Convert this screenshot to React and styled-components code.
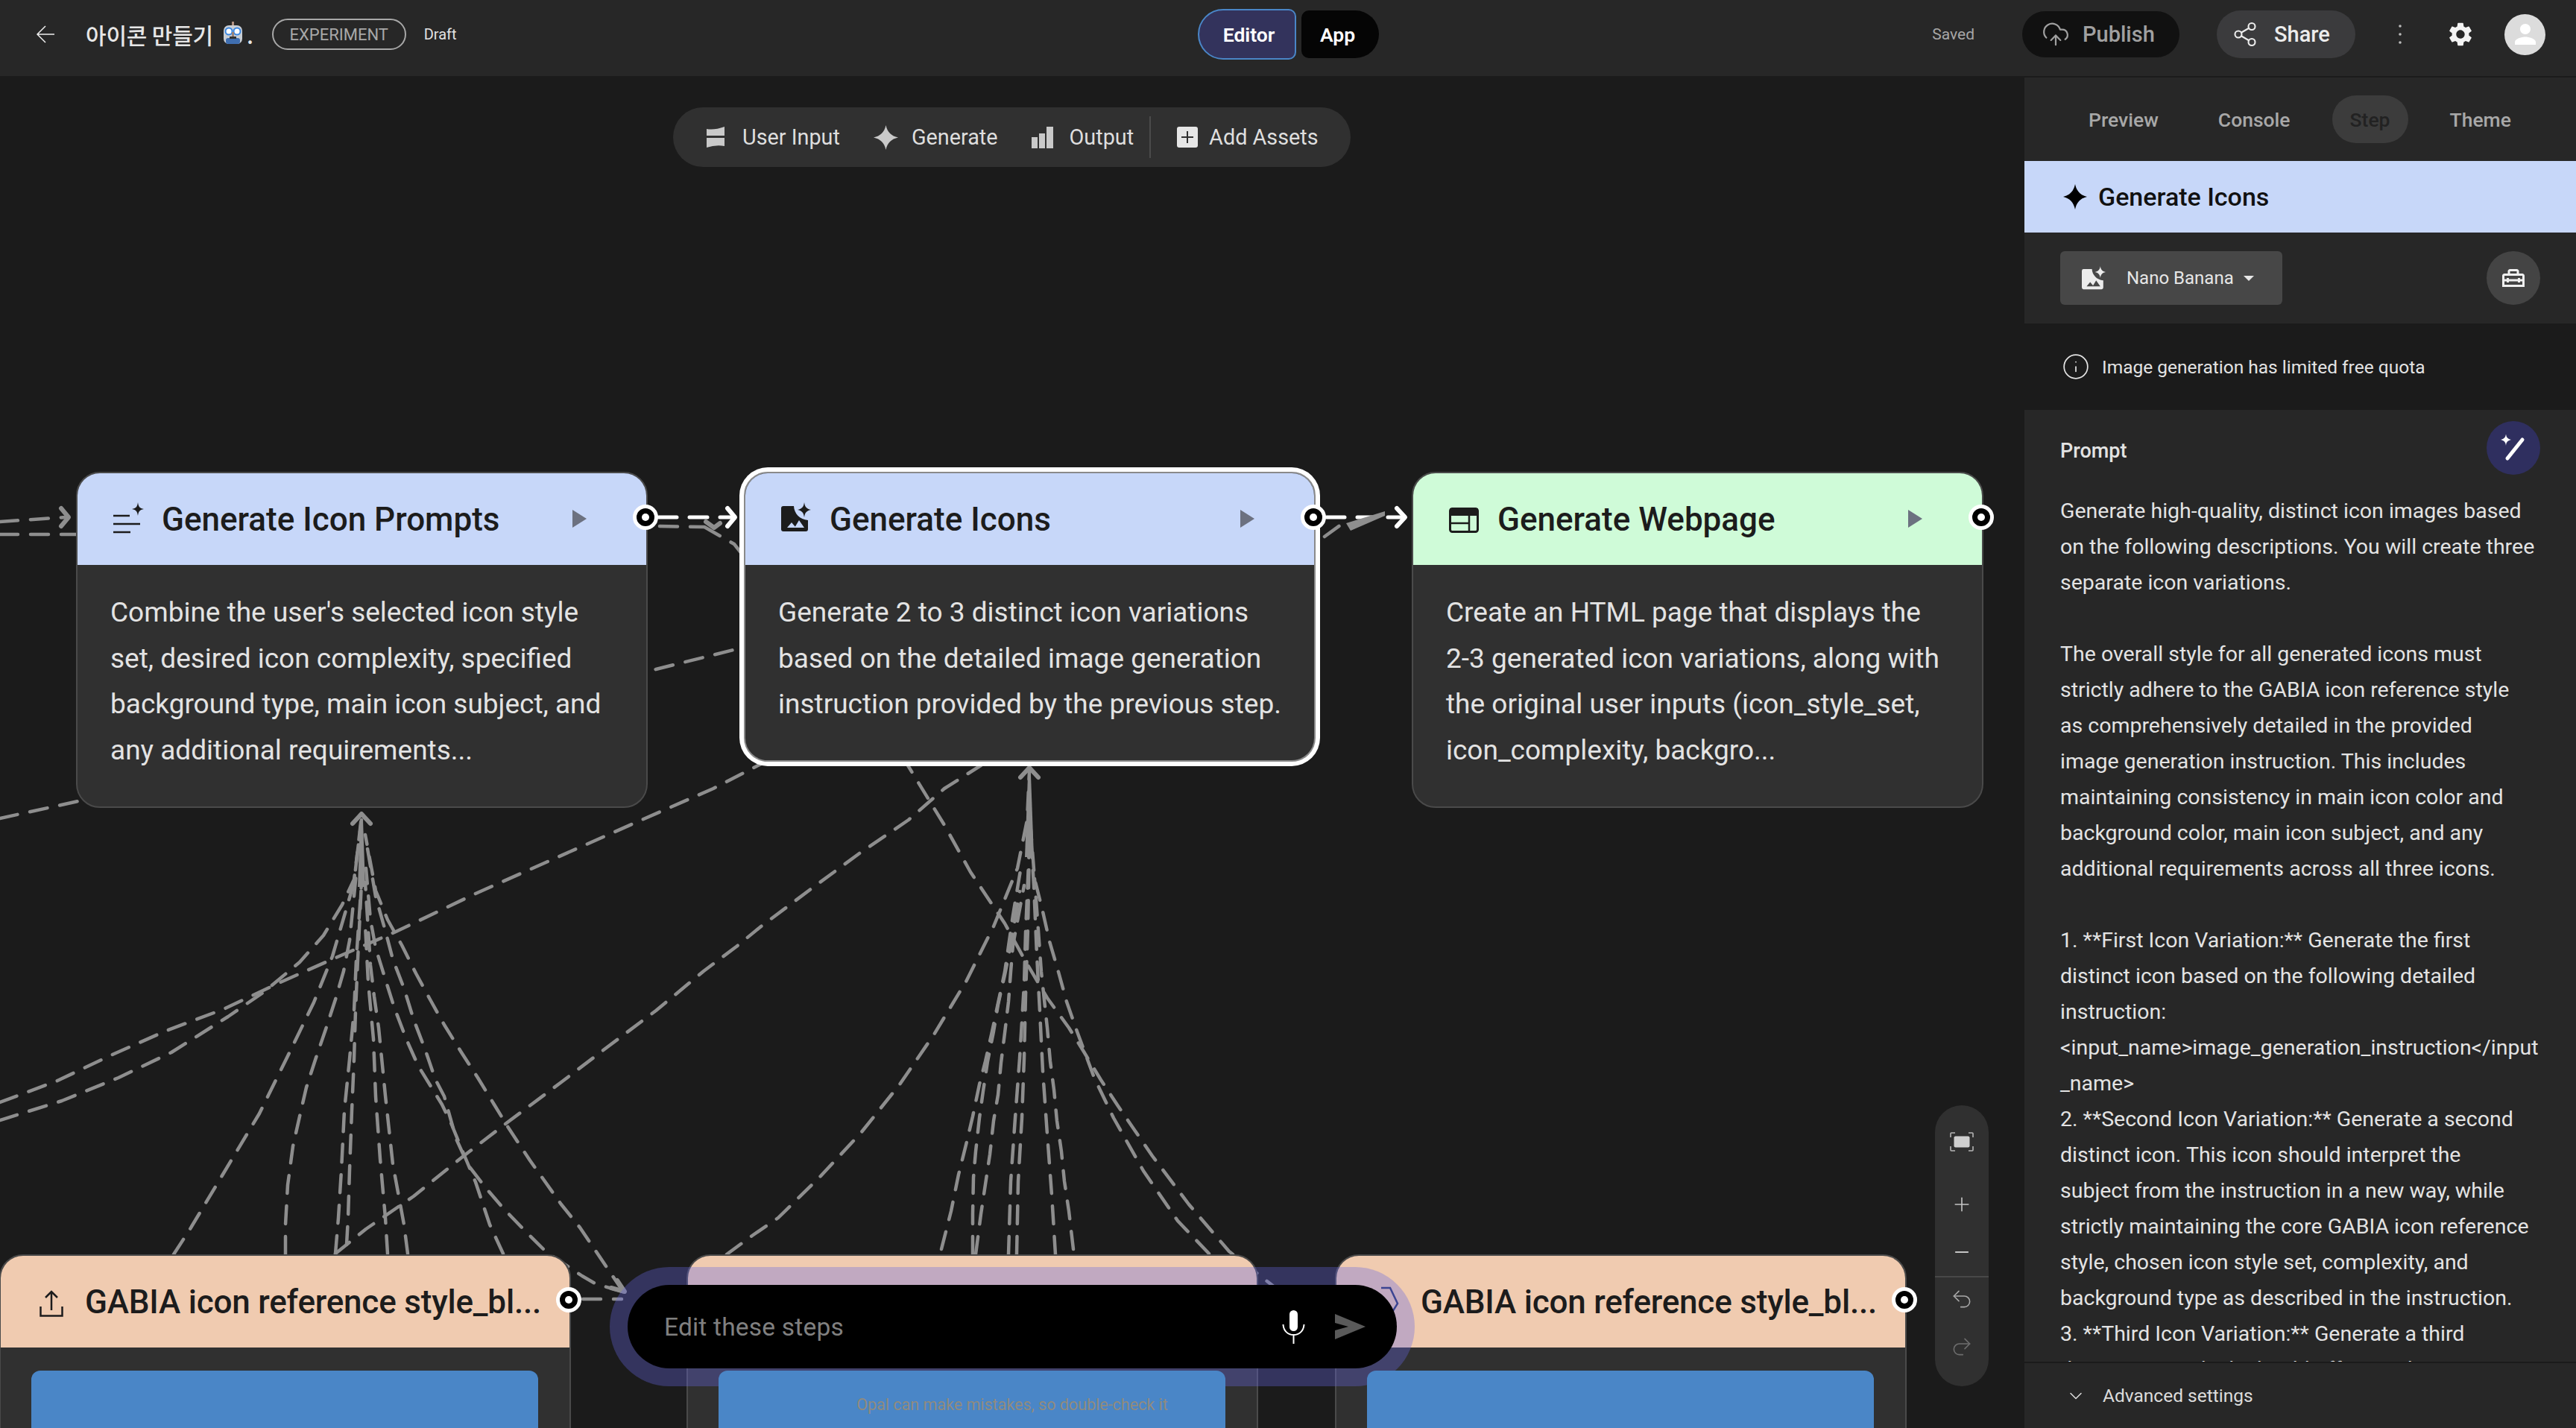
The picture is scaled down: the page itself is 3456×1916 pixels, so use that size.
import React from 'react'
import styled, { createGlobalStyle } from 'styled-components'
import { CloudUpload, Share2, Info, ChevronDown, Plus, Minus, Undo2, Redo2 } from 'lucide-react'
import { MdSettings, MdPerson, MdOutlineHomeRepairService } from 'react-icons/md'

const GlobalStyle = createGlobalStyle`
    html, body {
        margin: 0;
        padding: 0;
        background: #1b1b1b;
    }
    body {
        font-family: Roboto, "Noto Sans CJK KR", sans-serif;
    }
`

const Page = styled.div`
    width: 3456px;
    height: 1916px;
    display: flex;
    flex-direction: column;
    overflow: hidden;
    background: #1b1b1b;
`

/* header */

const Header = styled.header`
    height: 102px;
    flex: none;
    display: grid;
    grid-template-columns: 1fr auto 1fr;
    align-items: center;
    padding: 0 41px 10px 41px;
    box-sizing: border-box;
    background: #272727;
`

const HeaderLeft = styled.div`
    display: flex;
    align-items: center;
`

const BackIcon = styled.svg`
    width: 24px;
    height: 24px;
    margin: 0 42px 0 8px;
    fill: none;
    stroke: #f0f0f0;
    stroke-width: 1.5;
`

const Title = styled.div`
    display: flex;
    align-items: center;
    font-family: 'Noto Sans CJK KR', sans-serif;
    font-size: 30px;
    font-weight: 500;
    color: #e6e6e6;
    margin-right: 25px;
    letter-spacing: -0.2px;
`

const RobotIcon = styled.svg`
    width: 27px;
    height: 32px;
    margin: 0 5px 4px 13px;
`

const ExperimentPill = styled.span`
    height: 42px;
    width: 180px;
    box-sizing: border-box;
    display: flex;
    align-items: center;
    justify-content: center;
    border: 2px solid #a8a8a8;
    border-radius: 21px;
    font-size: 22px;
    color: #a8a8a8;
    margin-right: 24px;
`

const DraftLabel = styled.span`
    font-size: 20px;
    color: #e2e2e2;
`

const ModeToggle = styled.div`
    display: flex;
    align-items: center;
    gap: 7px;
`

const ModeButton = styled.button`
    height: ${(p) => (p.$active ? 68 : 64)}px;
    width: ${(p) => (p.$active ? 132 : 104)}px;
    box-sizing: border-box;
    border: ${(p) => (p.$active ? '2px solid #4a86c7' : 'none')};
    border-radius: ${(p) => (p.$active ? '34px 10px 10px 34px' : '10px 32px 32px 10px')};
    background: ${(p) => (p.$active ? '#33335c' : '#050505')};
    color: #fff;
    font-family: inherit;
    font-size: 26.5px;
    font-weight: 600;
    padding: ${(p) => (p.$active ? '0 0 0 6px' : '0 6px 0 0')};
`

const HeaderRight = styled.div`
    display: flex;
    align-items: center;
    justify-content: flex-end;
`

const SavedLabel = styled.span`
    font-size: 21px;
    color: #a6a6a6;
    margin-right: 64px;
`

const PublishButton = styled.div`
    width: 211px;
    height: 62px;
    box-sizing: border-box;
    display: flex;
    align-items: center;
    gap: 17px;
    padding-left: 26px;
    border-radius: 31px;
    background: #111;
    color: #a0a0a0;
    font-size: 29px;
    font-weight: 500;
    margin-right: 50px;
`

const ShareButton = styled.div`
    width: 186px;
    height: 64px;
    box-sizing: border-box;
    display: flex;
    align-items: center;
    gap: 21px;
    padding-left: 20px;
    border-radius: 32px;
    background: #3b3b3d;
    color: #ececec;
    font-size: 29px;
    font-weight: 500;
    margin-right: 48px;
`

const DotsIcon = styled.svg`
    width: 24px;
    height: 32px;
    fill: #bdbdbd;
    margin-right: 50px;
`

const GearIcon = styled(MdSettings)`
    width: 38px;
    height: 38px;
    color: #f4f4f4;
    margin-right: 40px;
`

const Avatar = styled.div`
    width: 55px;
    height: 55px;
    border-radius: 50%;
    background: #dcdcdc;
    display: flex;
    align-items: center;
    justify-content: center;
    color: #fff;
    font-size: 42px;
`

/* canvas */

const Body = styled.div`
    flex: 1;
    display: flex;
    min-height: 0;
`

const Canvas = styled.main`
    position: relative;
    width: 2716px;
    flex: none;
    overflow: hidden;
    background: #1b1b1b;
`

const EdgeLayer = styled.svg`
    position: absolute;
    left: 0;
    top: 0;
    width: 2716px;
    height: 1814px;
`

const DashedEdge = styled.polyline`
    fill: none;
    stroke: ${(p) => (p.$active ? '#ffffff' : '#8e8e8e')};
    stroke-width: ${(p) => (p.$active ? 5 : 4.5)};
    stroke-linecap: round;
    stroke-linejoin: round;
    stroke-dasharray: 24 17;
`

const ArrowHead = styled.polyline`
    fill: none;
    stroke: ${(p) => (p.$active ? '#ffffff' : '#8e8e8e')};
    stroke-width: 6;
    stroke-linecap: round;
    stroke-linejoin: round;
`

const Trunk = styled.polygon`
    fill: #8e8e8e;
`

const Palette = styled.div`
    position: absolute;
    left: 903px;
    top: 42px;
    height: 80px;
    width: 909px;
    box-sizing: border-box;
    display: flex;
    align-items: center;
    padding-left: 45px;
    border-radius: 40px;
    background: #303030;
`

const PaletteItem = styled.div`
    display: flex;
    align-items: center;
    gap: ${(p) => p.$gap || 22}px;
    margin-right: ${(p) => p.$after || 0}px;
    font-size: 28.8px;
    color: #dedede;
`

const PaletteDivider = styled.div`
    width: 2px;
    height: 56px;
    background: #4b4b4b;
    margin-right: 35px;
`

const PaletteIcon = styled.svg`
    width: ${(p) => p.$w}px;
    height: ${(p) => p.$h || p.$w}px;
    fill: #c9c9c9;
`

const Node = styled.section`
    position: absolute;
    left: ${(p) => p.$x}px;
    top: ${(p) => p.$y}px;
    width: 767px;
    box-sizing: border-box;
    border: 2px solid ${(p) => (p.$selected ? '#8a8a8a' : '#4a4a4a')};
    border-radius: 32px;
    background: #303030;
    box-shadow: ${(p) => (p.$selected ? '0 0 0 6px #fff' : 'none')};
`

const NodeHeader = styled.div`
    height: 123px;
    display: flex;
    align-items: center;
    box-sizing: border-box;
    padding: 0 80px 0 48px;
    border-radius: 30px 30px 0 0;
    background: ${(p) => p.$color};
    color: #1c1c1c;
`

const NodeIconBox = styled.div`
    width: 40px;
    flex: none;
    margin-right: 25px;
    display: flex;
    justify-content: center;
`

const NodeIcon = styled.svg`
    width: ${(p) => p.$w || 40}px;
    height: 40px;
    overflow: visible;
    display: block;
`

const NodeTitle = styled.h3`
    flex: 1;
    margin: 0;
    font-size: 44px;
    font-weight: 500;
    white-space: nowrap;
    letter-spacing: ${(p) => (p.$tight ? -0.2 : 0)}px;
`

const PlayIcon = styled.svg`
    width: 19px;
    height: 24px;
    flex: none;
    margin-top: -2px;
    fill: #6c7180;
`

const NodeBody = styled.div`
    padding: 33px 20px 44px 44px;
    font-size: 37px;
    line-height: 61.7px;
    color: #e3e3e3;
    white-space: pre;
`

const AssetBody = styled.div`
    padding: 31px 40px 0 41px;
    height: 200px;
`

const AssetImage = styled.div`
    position: relative;
    z-index: 2;
    height: 200px;
    width: 680px;
    margin-left: 0;
    border-radius: 12px 12px 0 0;
    background: #4a86c7;
`

const Port = styled.div`
    position: absolute;
    right: -16px;
    top: ${(p) => p.$top || 42}px;
    width: 34px;
    height: 34px;
    box-sizing: border-box;
    border: 5px solid #fff;
    border-radius: 50%;
    background: #000;
    display: flex;
    align-items: center;
    justify-content: center;

    &::after {
        content: '';
        width: 10px;
        height: 10px;
        border-radius: 50%;
        background: #fff;
    }
`

const Dock = styled.div`
    position: absolute;
    z-index: 1;
    left: 818px;
    top: 1598px;
    width: 1080px;
    height: 160px;
    box-sizing: border-box;
    padding: 24px;
    border-radius: 80px;
    background: rgba(103, 102, 225, 0.34);
`

const DockBar = styled.div`
    height: 112px;
    display: flex;
    align-items: center;
    padding: 0 42px 0 49px;
    border-radius: 56px;
    background: #000;
`

const DockPlaceholder = styled.span`
    flex: 1;
    font-size: 33.5px;
    color: #808080;
    letter-spacing: 0.2px;
`

const MicIcon = styled.svg`
    width: 31px;
    height: 45px;
    margin-right: 40px;
`

const SendIcon = styled.svg`
    width: 41px;
    height: 34px;
    fill: #5a5a5a;
`

const Disclaimer = styled.div`
    position: absolute;
    z-index: 3;
    left: 818px;
    width: 1080px;
    top: 1770px;
    text-align: center;
    font-size: 21.5px;
    color: #908b7e;
`

const ZoomPanel = styled.div`
    position: absolute;
    left: 2596px;
    top: 1381px;
    width: 72px;
    height: 377px;
    box-sizing: border-box;
    padding-top: 17px;
    display: flex;
    flex-direction: column;
    align-items: center;
    border-radius: 36px;
    background: #303030;
`

const ZoomButton = styled.div`
    width: 100%;
    height: 64px;
    flex: none;
    display: flex;
    align-items: center;
    justify-content: center;
    margin-bottom: ${(p) => p.$after || 0}px;
    color: ${(p) => p.$color || '#c4c4c4'};
`

const ZoomDivider = styled.div`
    width: 100%;
    height: 2px;
    flex: none;
    margin-bottom: -3px;
    background: #484848;
`

/* sidebar */

const Sidebar = styled.aside`
    flex: 1;
    display: flex;
    flex-direction: column;
    min-width: 0;
    border-top: 2px solid #1b1b1b;
    background: #272727;
`

const Tabs = styled.nav`
    height: 112px;
    flex: none;
    box-sizing: border-box;
    display: flex;
    align-items: center;
    gap: 32px;
    padding: 0 0 0 62px;
`

const Tab = styled.div`
    height: 64px;
    display: flex;
    align-items: center;
    padding: 0 24px;
    border-radius: 32px;
    font-size: 26.5px;
    font-weight: 500;
    color: ${(p) => (p.$active ? '#222' : '#a8a8a8')};
    background: ${(p) => (p.$active ? '#3c3c3c' : 'transparent')};
`

const StepBanner = styled.div`
    height: 96px;
    flex: none;
    display: flex;
    align-items: center;
    gap: 15px;
    padding-left: 52px;
    background: #c7d7f9;
    color: #111;
    font-size: 34px;
    font-weight: 500;
`

const BannerStar = styled.svg`
    width: 32px;
    height: 34px;
    fill: #000;
`

const ModelRow = styled.div`
    height: 122px;
    flex: none;
    display: flex;
    align-items: center;
    justify-content: space-between;
    padding: 0 48px;
`

const ModelSelect = styled.div`
    width: 298px;
    height: 72px;
    box-sizing: border-box;
    display: flex;
    align-items: center;
    padding-left: 29px;
    border-radius: 6px;
    background: #474747;
    color: #e6e6e6;
    font-size: 24px;
`

const ModelIcon = styled.svg`
    width: 32px;
    height: 36px;
    margin-right: 28px;
`

const Caret = styled.span`
    width: 0;
    height: 0;
    margin-left: 13px;
    border-left: 7px solid transparent;
    border-right: 7px solid transparent;
    border-top: 7px solid #e6e6e6;
`

const RoundButton = styled.div`
    width: 72px;
    height: 72px;
    border-radius: 50%;
    display: flex;
    align-items: center;
    justify-content: center;
    background: ${(p) => p.$color};
    color: #f0f0f0;
`

const QuotaRow = styled.div`
    height: 116px;
    flex: none;
    display: flex;
    align-items: center;
    gap: 16px;
    padding-left: 50px;
    background: #1b1b1b;
    color: #e3e3e3;
    font-size: 24.5px;
`

const PromptSection = styled.section`
    flex: 1;
    min-height: 0;
    overflow: hidden;
`

const PromptHead = styled.div`
    display: flex;
    align-items: center;
    justify-content: space-between;
    padding: 15px 48px 25px;
`

const PromptLabel = styled.span`
    font-size: 27px;
    font-weight: 500;
    color: #e3e3e3;
    margin-top: 8px;
`

const PromptText = styled.div`
    padding: 0 0 0 48px;
    font-size: 28.5px;
    line-height: 48px;
    color: #e3e3e3;
    white-space: pre;
`

const AdvancedRow = styled.div`
    height: 89px;
    flex: none;
    box-sizing: border-box;
    display: flex;
    align-items: center;
    gap: 22px;
    padding-left: 55px;
    border-top: 2px solid #1b1b1b;
    color: #dcdcdc;
    font-size: 24.5px;
`

/* drawings */

const STAR = 'M12 0C13.4 6.6 17.4 10.6 24 12C17.4 13.4 13.4 17.4 12 24C10.6 17.4 6.6 13.4 0 12C6.6 10.6 10.6 6.6 12 0Z'

const ImageSpark = ({ fg, cut }) => (
    <>
        <path
            fill={fg}
            d="M3 2H17C17.5 12 25 20 36 21V33Q36 36 33 36H3Q0 36 0 33V5Q0 2 3 2Z"
        />
        <path fill={cut} d="M8 31L14 24L20 31ZM18 31L24 21L31 31Z" />
        <path
            fill={fg}
            d="M31 -3C31.8 3 34 5.5 40 7C34 8.5 31.8 11 31 17C30.2 11 28 8.5 22 7C28 5.5 30.2 3 31 -3Z"
        />
    </>
)

const PromptsGlyph = () => (
    <>
        <path stroke="#1c1c1c" strokeWidth="2.5" fill="none" d="M0 15H22M0 26H36M0 37H23" />
        <path
            fill="#1c1c1c"
            d="M33 -3C33.8 3 35.5 5 41 6C35.5 7 33.8 9 33 15C32.2 9 30.5 7 25 6C30.5 5 32.2 3 33 -3Z"
        />
    </>
)

const WebGlyph = () => (
    <>
        <rect x="1.5" y="5.5" width="37" height="31" rx="3" fill="none" stroke="#1c1c1c" strokeWidth="3" />
        <path fill="#1c1c1c" d="M1 5H39V15H1Z" />
        <path stroke="#1c1c1c" strokeWidth="2.5" fill="none" d="M1 25H27M27 15V36" />
    </>
)

const UploadGlyph = () => (
    <path
        fill="none"
        stroke="#1c1c1c"
        strokeWidth="2.5"
        d="M1.5 26V38.5H30.5V26M16 31V6M8 14L16 6L24 14"
    />
)

const AttachGlyph = () => (
    <path fill="none" stroke="#26346a" strokeWidth="2.5" d="M8 1H20L30 22L20 38" />
)

const Play = () => (
    <PlayIcon viewBox="0 0 19 24">
        <path d="M0 0L19 12L0 24Z" />
    </PlayIcon>
)

const activeEdges = [
    [[884, 694], [982, 694]],
    [[1780, 694], [1882, 694]],
]

const edges = [
    // top left strays
    [[0, 700], [88, 694]],
    [[0, 717], [102, 717]],
    [[885, 706], [944, 707]],
    [[0, 1098], [105, 1075], [880, 898], [1000, 868]],
    [[1777, 720], [1806, 699]],

    // fan into Generate Icon Prompts
    [[0, 1503], [83, 1477], [159, 1446], [230, 1412], [306, 1364], [354, 1331], [402, 1291], [434, 1255], [459, 1214], [475, 1180], [485, 1100]],
    [[0, 1479], [77, 1450], [153, 1414], [223, 1383], [300, 1354], [376, 1318], [446, 1287], [529, 1251], [638, 1199], [746, 1151], [861, 1100], [957, 1058], [1021, 1025]],
    [[233, 1683], [255, 1649], [300, 1574], [348, 1494], [386, 1417], [421, 1345], [446, 1283], [475, 1184], [485, 1095]],
    [[383, 1683], [383, 1643], [386, 1590], [393, 1538], [402, 1498], [411, 1459], [424, 1419], [437, 1381], [450, 1341], [461, 1303], [469, 1262], [478, 1172]],
    [[450, 1682], [454, 1634], [458, 1570], [462, 1490], [469, 1421], [475, 1356], [478, 1287], [485, 1184]],
    [[465, 1670], [467, 1634], [469, 1570], [472, 1490], [475, 1421], [477, 1356], [480, 1287], [485, 1184]],
    [[547, 1682], [542, 1643], [527, 1562], [517, 1470], [508, 1379], [502, 1337], [497, 1295], [490, 1184]],
    [[520, 1682], [517, 1634], [510, 1555], [504, 1471], [501, 1394], [494, 1318], [490, 1241]],
    [[836, 1733], [778, 1647], [753, 1616], [711, 1557], [682, 1513], [663, 1482], [641, 1446], [619, 1412], [596, 1375], [577, 1341], [558, 1306], [539, 1268], [520, 1234], [504, 1195], [490, 1120]],
    [[836, 1733], [800, 1723], [781, 1712], [733, 1680], [702, 1649], [676, 1622], [651, 1593], [628, 1563], [612, 1528], [596, 1471], [584, 1448], [571, 1410], [555, 1368], [542, 1326], [527, 1287], [517, 1249], [504, 1203], [491, 1127]],
    [[675, 1682], [657, 1643], [638, 1586], [622, 1548], [606, 1509], [593, 1482], [577, 1456], [561, 1430], [545, 1394], [529, 1352], [517, 1314], [504, 1272], [497, 1234], [491, 1165]],
    [[782, 1743], [834, 1743]],

    // long diagonal from below into Generate Icons
    [[450, 1682], [491, 1649], [555, 1605], [622, 1551], [682, 1505], [753, 1452], [816, 1404], [880, 1356], [944, 1303], [988, 1270], [1021, 1243], [1089, 1192], [1153, 1145], [1219, 1100], [1267, 1058], [1316, 1027]],

    // fan into Generate Icons
    [[975, 1683], [1009, 1658], [1044, 1634], [1101, 1578], [1155, 1520], [1207, 1455], [1253, 1388], [1296, 1317], [1333, 1243], [1365, 1165], [1378, 1100], [1381, 1035]],
    [[1263, 1676], [1276, 1625], [1286, 1576], [1296, 1536], [1305, 1498], [1314, 1455], [1322, 1424], [1331, 1384], [1339, 1346], [1348, 1304], [1359, 1228], [1371, 1156]],
    [[1305, 1683], [1305, 1629], [1306, 1580], [1309, 1545], [1314, 1500], [1319, 1464], [1325, 1424], [1333, 1384], [1339, 1348], [1348, 1308], [1356, 1268], [1368, 1196]],
    [[1309, 1683], [1316, 1629], [1322, 1589], [1328, 1549], [1333, 1504], [1339, 1469], [1343, 1426], [1348, 1386], [1353, 1344], [1356, 1304], [1359, 1268], [1374, 1188]],
    [[1353, 1683], [1356, 1585], [1362, 1500], [1368, 1420], [1374, 1321], [1376, 1250], [1381, 1134]],
    [[1364, 1683], [1366, 1585], [1371, 1500], [1374, 1420], [1376, 1335], [1379, 1246], [1381, 1134]],
    [[1416, 1683], [1411, 1603], [1405, 1522], [1399, 1437], [1395, 1357], [1391, 1281], [1387, 1188], [1381, 1089]],
    [[1440, 1676], [1434, 1625], [1428, 1585], [1424, 1545], [1418, 1504], [1414, 1462], [1409, 1424], [1405, 1379], [1397, 1304], [1388, 1179]],
    [[1622, 1682], [1580, 1638], [1534, 1571], [1494, 1500], [1468, 1446], [1445, 1384], [1431, 1344], [1420, 1304], [1408, 1263], [1399, 1223], [1388, 1179], [1381, 1089]],
    [[945, 707], [985, 730], [1218, 1027], [1267, 1107], [1302, 1170], [1348, 1239], [1376, 1290], [1405, 1339], [1434, 1379], [1454, 1411], [1477, 1449], [1500, 1484], [1546, 1551], [1595, 1616], [1649, 1679], [1710, 1727]],
]

const toPoints = (points) => points.map((p) => p.join(',')).join(' ')

const EDIT_PROMPT = `Generate high-quality, distinct icon images based
on the following descriptions. You will create three
separate icon variations.

The overall style for all generated icons must
strictly adhere to the GABIA icon reference style
as comprehensively detailed in the provided
image generation instruction. This includes
maintaining consistency in main icon color and
background color, main icon subject, and any
additional requirements across all three icons.

1. **First Icon Variation:** Generate the first
distinct icon based on the following detailed
instruction:
<input_name>image_generation_instruction</input
_name>
2. **Second Icon Variation:** Generate a second
distinct icon. This icon should interpret the
subject from the instruction in a new way, while
strictly maintaining the core GABIA icon reference
style, chosen icon style set, complexity, and
background type as described in the instruction.
3. **Third Icon Variation:** Generate a third
distinct icon, which should offer another`

const App = () => {
    return (
        <Page>
            <GlobalStyle />
            <Header>
                <HeaderLeft>
                    <BackIcon viewBox="0 0 24 24">
                        <path d="M24 12H1M12 1L1 12L12 23" />
                    </BackIcon>
                    <Title>
                        아이콘 만들기
                        <RobotIcon viewBox="0 0 27 32">
                            <rect x="12" y="1" width="3" height="6" fill="#b09080" />
                            <rect x="1" y="6" width="25" height="25" rx="7" fill="#c9ced4" />
                            <circle cx="8" cy="14" r="4.5" fill="#fff" stroke="#3a86e0" strokeWidth="2" />
                            <circle cx="19" cy="14" r="4.5" fill="#fff" stroke="#3a86e0" strokeWidth="2" />
                            <rect x="12" y="15" width="3" height="6" fill="#9a8378" />
                            <rect x="4" y="23" width="19" height="8" rx="3" fill="#3f6eb0" />
                            <rect x="9" y="21" width="9" height="3" fill="#333" />
                        </RobotIcon>
                        .
                    </Title>
                    <ExperimentPill>EXPERIMENT</ExperimentPill>
                    <DraftLabel>Draft</DraftLabel>
                </HeaderLeft>
                <ModeToggle>
                    <ModeButton $active>Editor</ModeButton>
                    <ModeButton>App</ModeButton>
                </ModeToggle>
                <HeaderRight>
                    <SavedLabel>Saved</SavedLabel>
                    <PublishButton>
                        <CloudUpload size={38} strokeWidth={1.4} />
                        Publish
                    </PublishButton>
                    <ShareButton>
                        <Share2 size={36} strokeWidth={1.4} />
                        Share
                    </ShareButton>
                    <DotsIcon viewBox="0 0 24 32">
                        <circle cx="12" cy="5" r="1.8" />
                        <circle cx="12" cy="16" r="1.8" />
                        <circle cx="12" cy="27" r="1.8" />
                    </DotsIcon>
                    <GearIcon />
                    <Avatar>
                        <MdPerson />
                    </Avatar>
                </HeaderRight>
            </Header>
            <Body>
                <Canvas>
                    <EdgeLayer viewBox="0 102 2716 1814">
                        {edges.map((points, i) => (
                            <DashedEdge key={i} points={toPoints(points)} />
                        ))}
                        {activeEdges.map((points, i) => (
                            <DashedEdge key={i} $active points={toPoints(points)} />
                        ))}
                        <Trunk points="483,1100 487,1100 490,1190 480,1190" />
                        <Trunk points="1379,1040 1383,1040 1387,1150 1375,1150" />
                        <Trunk points="1806,702 1858,686 1858,692 1812,712" />
                        <ArrowHead points="473,1105 485,1092 497,1105" />
                        <ArrowHead points="1369,1043 1381,1030 1393,1043" />
                        <ArrowHead points="82,682 92,694 82,706" />
                        <ArrowHead points="947,700 958,708 966,702" />
                        <ArrowHead points="820,1728 838,1733 828,1718" />
                        <ArrowHead $active points="976,682 986,694 976,706" />
                        <ArrowHead $active points="1874,682 1885,694 1874,706" />
                    </EdgeLayer>

                    <Palette>
                        <PaletteItem $gap={24} $after={45}>
                            <PaletteIcon $w={24} $h={28} viewBox="0 0 24 28">
                                <path d="M0 3Q10 5 24 0V12H0ZM0 15H24V26Q12 24 0 28Z" />
                            </PaletteIcon>
                            User Input
                        </PaletteItem>
                        <PaletteItem $gap={18} $after={45}>
                            <PaletteIcon $w={33} viewBox="0 0 24 24">
                                <path d={STAR} />
                            </PaletteIcon>
                            Generate
                        </PaletteItem>
                        <PaletteItem $gap={22} $after={21}>
                            <PaletteIcon $w={29} viewBox="0 0 29 29">
                                <path d="M0 14H8V29H0ZM10 9H18V29H10ZM20 0H29V29H20Z" />
                            </PaletteIcon>
                            Output
                        </PaletteItem>
                        <PaletteDivider />
                        <PaletteItem $gap={15}>
                            <PaletteIcon $w={28} viewBox="0 0 28 28">
                                <rect width="28" height="28" rx="3" fill="#e6e6e6" />
                                <path d="M14 6V22M6 14H22" stroke="#303030" strokeWidth="2" />
                            </PaletteIcon>
                            Add Assets
                        </PaletteItem>
                    </Palette>

                    <Node $x={102} $y={531}>
                        <NodeHeader $color="#c7d7f9">
                            <NodeIconBox>
                                <NodeIcon viewBox="0 0 40 40">
                                    <PromptsGlyph />
                                </NodeIcon>
                            </NodeIconBox>
                            <NodeTitle>Generate Icon Prompts</NodeTitle>
                            <Play />
                        </NodeHeader>
                        <NodeBody>{`Combine the user's selected icon style
set, desired icon complexity, specified
background type, main icon subject, and
any additional requirements...`}</NodeBody>
                        <Port />
                    </Node>

                    <Node $x={998} $y={531} $selected>
                        <NodeHeader $color="#c7d7f9">
                            <NodeIconBox>
                                <NodeIcon viewBox="0 0 40 40">
                                    <ImageSpark fg="#1c1c1c" cut="#c7d7f9" />
                                </NodeIcon>
                            </NodeIconBox>
                            <NodeTitle>Generate Icons</NodeTitle>
                            <Play />
                        </NodeHeader>
                        <NodeBody>{`Generate 2 to 3 distinct icon variations
based on the detailed image generation
instruction provided by the previous step.`}</NodeBody>
                        <Port />
                    </Node>

                    <Node $x={1894} $y={531}>
                        <NodeHeader $color="#cffbd8">
                            <NodeIconBox>
                                <NodeIcon viewBox="0 0 40 40">
                                    <WebGlyph />
                                </NodeIcon>
                            </NodeIconBox>
                            <NodeTitle>Generate Webpage</NodeTitle>
                            <Play />
                        </NodeHeader>
                        <NodeBody>{`Create an HTML page that displays the
2-3 generated icon variations, along with
the original user inputs (icon_style_set,
icon_complexity, backgro...`}</NodeBody>
                        <Port />
                    </Node>

                    <Node $x={-1} $y={1581}>
                        <NodeHeader $color="#f0cbb0">
                            <NodeIconBox>
                                <NodeIcon $w={32} viewBox="0 0 32 40">
                                    <UploadGlyph />
                                </NodeIcon>
                            </NodeIconBox>
                            <NodeTitle $tight>GABIA icon reference style_bl...</NodeTitle>
                        </NodeHeader>
                        <AssetBody>
                            <AssetImage />
                        </AssetBody>
                        <Port />
                    </Node>

                    <Node $x={921} $y={1581}>
                        <NodeHeader $color="#f0cbb0">
                            <NodeIconBox>
                                <NodeIcon $w={32} viewBox="0 0 32 40">
                                    <UploadGlyph />
                                </NodeIcon>
                            </NodeIconBox>
                            <NodeTitle $tight>GABIA icon reference style_bl...</NodeTitle>
                        </NodeHeader>
                        <AssetBody>
                            <AssetImage />
                        </AssetBody>
                        <Port />
                    </Node>

                    <Node $x={1791} $y={1581}>
                        <NodeHeader $color="#f0cbb0">
                            <NodeIconBox>
                                <NodeIcon $w={32} viewBox="0 0 32 40">
                                    <AttachGlyph />
                                </NodeIcon>
                            </NodeIconBox>
                            <NodeTitle $tight>GABIA icon reference style_bl...</NodeTitle>
                        </NodeHeader>
                        <AssetBody>
                            <AssetImage />
                        </AssetBody>
                        <Port />
                    </Node>

                    <Dock>
                        <DockBar>
                            <DockPlaceholder>Edit these steps</DockPlaceholder>
                            <MicIcon viewBox="0 0 31 45">
                                <rect x="10" y="0" width="11" height="28" rx="5.5" fill="#fff" />
                                <path
                                    d="M1.5 19C2 28 8 33 15.5 33C23 33 29 28 29.5 19M15.5 33V45"
                                    fill="none"
                                    stroke="#fff"
                                    strokeWidth="2"
                                />
                            </MicIcon>
                            <SendIcon viewBox="0 0 41 34">
                                <path d="M0 0L41 17L0 34V22L18 17L0 12Z" />
                            </SendIcon>
                        </DockBar>
                    </Dock>
                    <Disclaimer>Opal can make mistakes, so double-check it</Disclaimer>

                    <ZoomPanel>
                        <ZoomButton $after={20}>
                            <svg width="32" height="26" viewBox="0 0 32 26" fill="none">
                                <rect x="5.5" y="5.5" width="21" height="15" rx="2" fill="#cfcfcf" />
                                <path
                                    d="M1 7V2Q1 1 2 1H7M25 1H30Q31 1 31 2V7M31 19V24Q31 25 30 25H25M7 25H2Q1 25 1 24V19"
                                    stroke="#b5b5b5"
                                    strokeWidth="1.6"
                                />
                            </svg>
                        </ZoomButton>
                        <ZoomButton>
                            <Plus size={30} strokeWidth={1.3} />
                        </ZoomButton>
                        <ZoomButton>
                            <Minus size={28} strokeWidth={1.6} />
                        </ZoomButton>
                        <ZoomDivider />
                        <ZoomButton $color="#a8a8a8">
                            <Undo2 size={32} strokeWidth={1.2} />
                        </ZoomButton>
                        <ZoomButton $color="#6e6e6e">
                            <Redo2 size={32} strokeWidth={1.2} />
                        </ZoomButton>
                    </ZoomPanel>
                </Canvas>

                <Sidebar>
                    <Tabs>
                        <Tab>Preview</Tab>
                        <Tab>Console</Tab>
                        <Tab $active>Step</Tab>
                        <Tab>Theme</Tab>
                    </Tabs>
                    <StepBanner>
                        <BannerStar viewBox="0 0 24 24" preserveAspectRatio="none">
                            <path d={STAR} />
                        </BannerStar>
                        Generate Icons
                    </StepBanner>
                    <ModelRow>
                        <ModelSelect>
                            <ModelIcon viewBox="0 -4 40 42">
                                <ImageSpark fg="#ececec" cut="#474747" />
                            </ModelIcon>
                            Nano Banana
                            <Caret />
                        </ModelSelect>
                        <RoundButton $color="#444">
                            <MdOutlineHomeRepairService size={36} />
                        </RoundButton>
                    </ModelRow>
                    <QuotaRow>
                        <Info size={38} strokeWidth={1.1} />
                        Image generation has limited free quota
                    </QuotaRow>
                    <PromptSection>
                        <PromptHead>
                            <PromptLabel>Prompt</PromptLabel>
                            <RoundButton $color="#2f2f5f">
                                <svg width="36" height="36" viewBox="0 0 36 36">
                                    <path
                                        fill="#fff"
                                        d="M8 -1C8.6 4 10 5.6 15 7C10 8.4 8.6 10 8 15C7.4 10 6 8.4 1 7C6 5.6 7.4 4 8 -1Z"
                                    />
                                    <path d="M30 7L10 32" stroke="#fff" strokeWidth="5" strokeLinecap="round" />
                                </svg>
                            </RoundButton>
                        </PromptHead>
                        <PromptText>{EDIT_PROMPT}</PromptText>
                    </PromptSection>
                    <AdvancedRow>
                        <ChevronDown size={28} strokeWidth={1.3} />
                        Advanced settings
                    </AdvancedRow>
                </Sidebar>
            </Body>
        </Page>
    )
}

export default App
